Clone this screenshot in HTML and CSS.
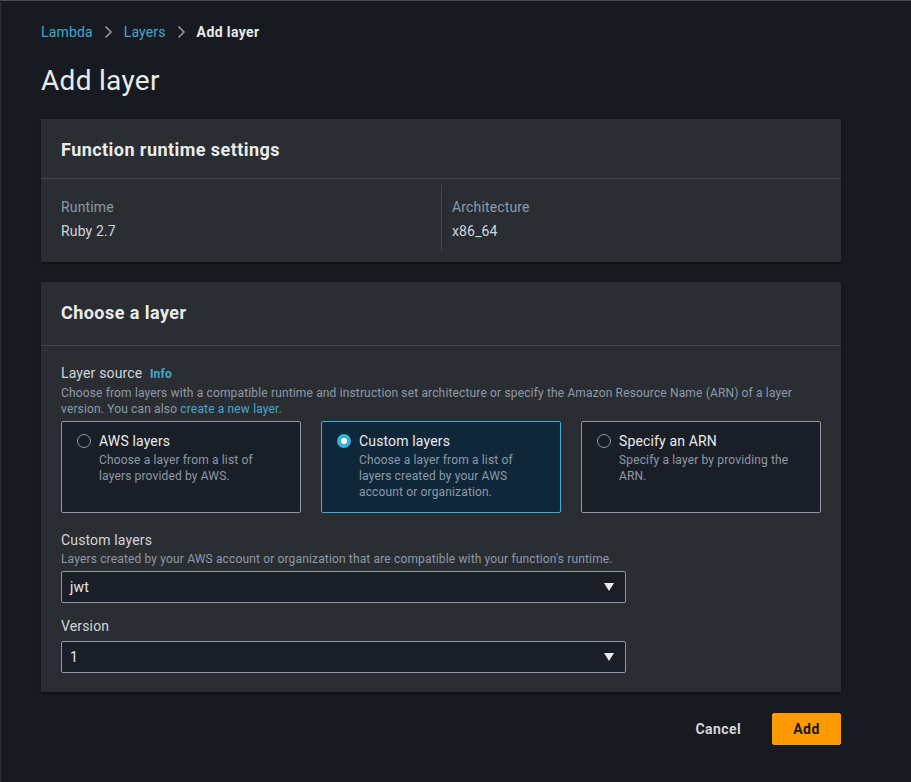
FILE: index.html
```html
<!DOCTYPE html>
<html lang="en">
<head>
<meta charset="utf-8">
<title>Add layer</title>
<link rel="stylesheet" href="styles.css">
</head>
<body>
<div class="page">
  <nav class="crumbs">
    <a class="crumb-link" href="#">Lambda</a>
    <svg class="sep" width="16" height="16" viewBox="0 0 16 16"><path d="M5.5 2.5 11 8l-5.5 5.5" fill="none" stroke="#8d99a8" stroke-width="1.6"/></svg>
    <a class="crumb-link" href="#">Layers</a>
    <svg class="sep" width="16" height="16" viewBox="0 0 16 16"><path d="M5.5 2.5 11 8l-5.5 5.5" fill="none" stroke="#8d99a8" stroke-width="1.6"/></svg>
    <span class="crumb-current">Add layer</span>
  </nav>
  <h1 class="title">Add layer</h1>

  <section class="panel">
    <div class="panel-head"><h2 class="panel-title">Function runtime settings</h2></div>
    <div class="panel-body settings">
      <div class="col">
        <div class="kv-label">Runtime</div>
        <div class="kv-value">Ruby 2.7</div>
      </div>
      <div class="col col-right">
        <div class="kv-label">Architecture</div>
        <div class="kv-value">x86_64</div>
      </div>
    </div>
  </section>

  <section class="panel panel-2">
    <div class="panel-head head-2"><h2 class="panel-title">Choose a layer</h2></div>
    <div class="panel-body choose">
      <div class="field-label">Layer source <a class="info" href="#">Info</a></div>
      <p class="desc">Choose from layers with a compatible runtime and instruction set architecture or specify the Amazon Resource Name (ARN) of a layer version. You can also <a class="link" href="#">create a new layer</a>.</p>
      <div class="tiles">
        <div class="tile">
          <span class="radio"></span>
          <div class="tile-text">
            <div class="tile-title">AWS layers</div>
            <div class="tile-desc">Choose a layer from a list of layers provided by AWS.</div>
          </div>
        </div>
        <div class="tile tile-on">
          <span class="radio radio-on"></span>
          <div class="tile-text">
            <div class="tile-title">Custom layers</div>
            <div class="tile-desc">Choose a layer from a list of layers created by your AWS account or organization.</div>
          </div>
        </div>
        <div class="tile">
          <span class="radio"></span>
          <div class="tile-text">
            <div class="tile-title">Specify an ARN</div>
            <div class="tile-desc">Specify a layer by providing the ARN.</div>
          </div>
        </div>
      </div>

      <div class="field-label fl-custom">Custom layers</div>
      <p class="desc">Layers created by your AWS account or organization that are compatible with your function's runtime.</p>
      <div class="select">
        <span>jwt</span>
        <svg class="caret" width="12" height="10" viewBox="0 0 12 10"><path d="M1 1h10L6 9z" fill="#e9ebed"/></svg>
      </div>

      <div class="field-label fl-version">Version</div>
      <div class="select">
        <span>1</span>
        <svg class="caret" width="12" height="10" viewBox="0 0 12 10"><path d="M1 1h10L6 9z" fill="#e9ebed"/></svg>
      </div>
    </div>
  </section>

  <div class="actions">
    <button class="btn btn-link">Cancel</button>
    <button class="btn btn-primary">Add</button>
  </div>
</div>
</body>
</html>
```

FILE: styles.css
```css
html, body {
  margin: 0;
  padding: 0;
  height: 100%;
}
body {
  background: #171a21;
  font-family: Roboto, "Noto Sans", sans-serif;
  color: #d1d5db;
  letter-spacing: 0.15px;
}
.page {
  box-sizing: border-box;
  min-height: 100%;
  border-top: 1px solid #474c53;
  border-left: 1px solid #2c3036;
  padding: 20px 70px 40px 40px;
}
.crumbs {
  display: flex;
  align-items: center;
  height: 22px;
  font-size: 14px;
  line-height: 22px;
}
.crumb-link {
  color: #44a8cc;
  text-decoration: none;
}
.sep {
  margin: 0 8px 0 7px;
}
.crumb-current {
  color: #e9ebed;
  font-weight: 700;
  letter-spacing: 0.4px;
}
.title {
  margin: 20px 0 0;
  font-size: 28px;
  line-height: 36px;
  font-weight: 400;
  color: #e9ebed;
  letter-spacing: 0.3px;
}
.panel {
  margin-top: 20px;
  background: #2a2e33;
  box-shadow: 0 1px 2px rgba(0,0,0,0.6);
}
.panel-2 {
  margin-top: 20px;
}
.panel-head {
  padding: 20px 20px 17px;
  border-bottom: 1px solid #414750;
}
.head-2 {
  padding: 20px 20px 21px;
}
.panel-title {
  margin: 0;
  font-size: 18px;
  line-height: 22px;
  font-weight: 700;
  color: #e9ebed;
  letter-spacing: 0.45px;
}
.settings {
  display: grid;
  grid-template-columns: 1fr 1fr;
  padding: 6px 20px 10px;
}
.col {
  padding-top: 11px;
  padding-bottom: 10px;
}
.col-right {
  border-left: 1px solid #414750;
  padding-left: 10px;
}
.kv-label {
  font-size: 14px;
  line-height: 22px;
  color: #8d99a8;
}
.kv-value {
  font-size: 14px;
  line-height: 22px;
  color: #d1d5db;
  margin-top: 2px;
}
.choose {
  padding: 16px 20px 19px;
}
.field-label {
  font-size: 14px;
  line-height: 22px;
  color: #d1d5db;
}
.info {
  margin-left: 4px;
  font-size: 12px;
  font-weight: 700;
  color: #44a8cc;
  text-decoration: none;
}
.desc {
  margin: 0;
  font-size: 12px;
  line-height: 16px;
  color: #8d99a8;
}
.link {
  color: #44a8cc;
  text-decoration: none;
}
.tiles {
  display: grid;
  grid-template-columns: repeat(3, 240px);
  gap: 20px;
  margin-top: 4px;
}
.tile {
  box-sizing: border-box;
  height: 92px;
  display: flex;
  align-items: flex-start;
  gap: 8px;
  padding: 8px 24px 8px 15px;
  background: #1a1f27;
  border: 1px solid #8d99a8;
  border-radius: 2px;
}
.tile-on {
  background: #10273a;
  border-color: #3ab0d6;
}
.radio {
  flex: none;
  box-sizing: border-box;
  width: 14px;
  height: 14px;
  margin-top: 4px;
  border-radius: 50%;
  border: 1.5px solid #8d99a8;
}
.radio-on {
  border: 4.5px solid #3ab0d6;
  background: #ffffff;
}
.tile-title {
  font-size: 14px;
  line-height: 22px;
  color: #e9ebed;
}
.tile-desc {
  font-size: 12px;
  line-height: 16px;
  color: #8d99a8;
}
.fl-custom {
  margin-top: 16px;
}
.fl-version {
  margin-top: 12px;
}
.select {
  box-sizing: border-box;
  width: 565px;
  height: 32px;
  margin-top: 4px;
  display: flex;
  align-items: center;
  justify-content: space-between;
  padding: 0 10px 0 8px;
  background: #1a1f27;
  border: 1px solid #8d99a8;
  border-radius: 2px;
  font-size: 14px;
  color: #e9ebed;
}
.actions {
  display: flex;
  justify-content: flex-end;
  gap: 10px;
  margin-top: 21px;
}
.btn {
  box-sizing: border-box;
  height: 32px;
  padding: 0 20px;
  font-family: inherit;
  font-size: 14px;
  font-weight: 700;
  letter-spacing: 0.4px;
  border-radius: 2px;
  border: 1px solid transparent;
  cursor: pointer;
}
.btn-link {
  background: transparent;
  color: #d1d5db;
}
.btn-primary {
  background: #ff9900;
  border-color: #ff9900;
  color: #16191f;
  min-width: 69px;
}
```
